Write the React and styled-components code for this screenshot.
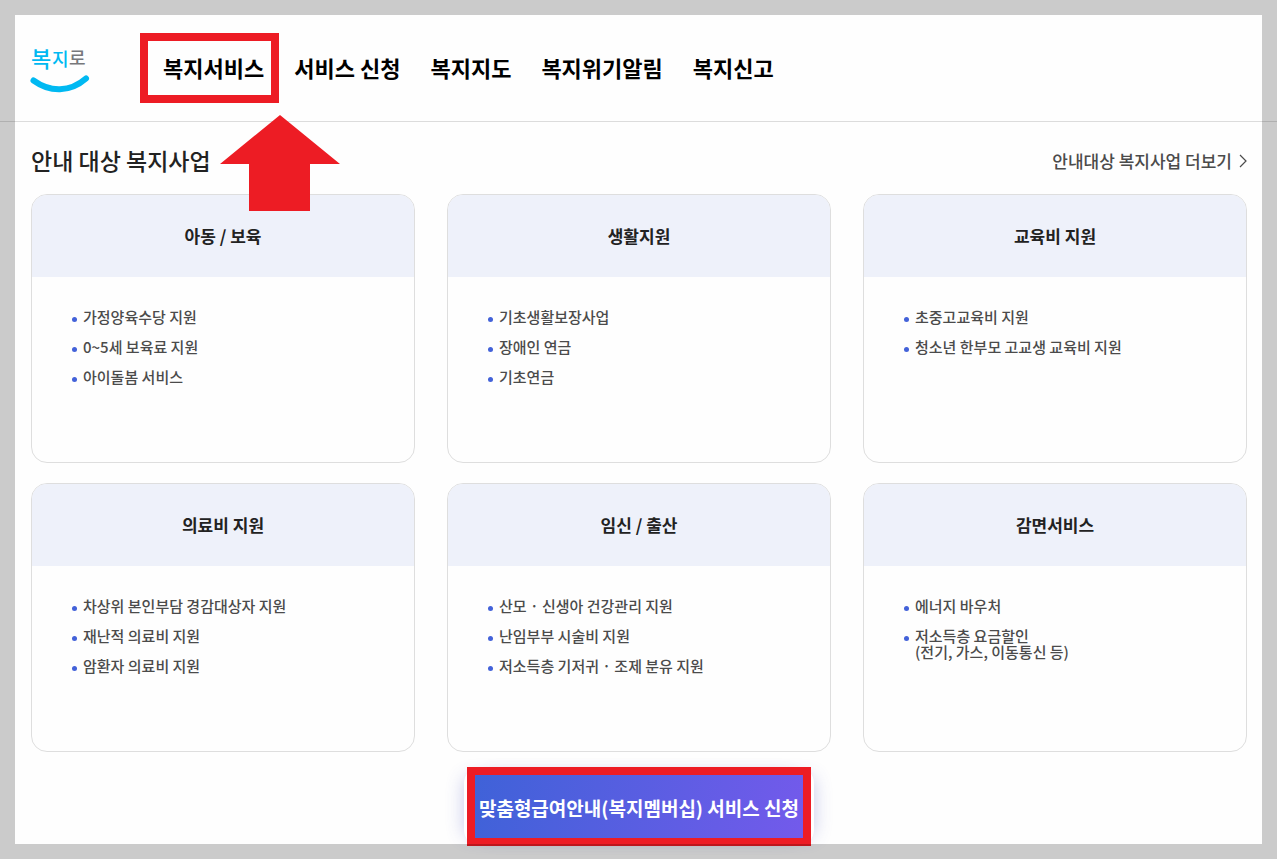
import React from "react";
import styled, { createGlobalStyle } from "styled-components";

const GlobalStyle = createGlobalStyle`
  *, *::before, *::after { box-sizing: border-box; }
  body {
    margin: 0;
    background: #fefefe;
    color: #222;
    font-family: "Noto Sans CJK KR", "Noto Sans", sans-serif;
  }
  a { color: inherit; text-decoration: none; }
  ul { list-style: none; margin: 0; padding: 0; }
`;

const Page = styled.div`
  min-height: 100vh;
  padding: 15px 0 13px;
`;

const PageFrame = styled.div`
  position: fixed;
  inset: 0;
  border: 15px solid rgba(0, 0, 0, 0.2);
  pointer-events: none;
  z-index: 10;
`;

const Header = styled.header`
  display: flex;
  align-items: center;
  gap: 73px;
  height: 107px;
  padding: 0 30px;
  border-bottom: 1px solid #dcdcdc;
`;

const LogoLink = styled.a`
  display: block;
  width: 60px;
  height: 56px;

  svg { display: block; overflow: visible; }
`;

const NavList = styled.ul`
  display: flex;
  gap: 30px;
  padding-bottom: 2px;
`;

const NavItem = styled.li`
  position: relative;
`;

const NavLink = styled.a`
  display: block;
  color: #000;
  font-size: 22px;
  font-weight: 700;
  line-height: 32px;
  white-space: nowrap;
`;

const NavHighlight = styled.span`
  position: absolute;
  inset: -18px -15px -20px -23px;
  border: 8px solid #ed1c24;
  pointer-events: none;
`;

const Arrow = styled.svg`
  position: absolute;
  left: 57px;
  top: 64px;
  z-index: 2;
  pointer-events: none;
`;

const Main = styled.main`
  padding: 0 30px 0 31px;
`;

const SectionHead = styled.div`
  display: flex;
  align-items: center;
  justify-content: space-between;
  height: 72px;
`;

const SectionTitle = styled.h1`
  margin: 0;
  padding-top: 4px;
  font-size: 23px;
  font-weight: 500;
  line-height: 32px;
`;

const MoreLink = styled.a`
  display: flex;
  align-items: center;
  gap: 7px;
  padding-top: 6px;
  color: #4b4b4b;
  font-size: 17px;
  font-weight: 500;
  line-height: 24px;
`;

const CardGrid = styled.div`
  display: grid;
  grid-template-columns: repeat(3, 1fr);
  gap: 20px 32px;
`;

const Card = styled.section`
  min-height: 269px;
  border: 1px solid #dedede;
  border-radius: 16px;
  overflow: hidden;
`;

const CardTitle = styled.h2`
  margin: 0;
  padding: 29px 16px;
  background: #eef1fa;
  font-size: 17px;
  font-weight: 700;
  line-height: 24px;
  text-align: center;
`;

const ServiceList = styled.ul`
  display: flex;
  flex-direction: column;
  gap: 14px;
  padding: 32px 40px;
`;

const ServiceItem = styled.li`
  display: flex;
  gap: 6px;
  color: #4b4b4b;
  font-size: 15px;
  font-weight: 500;
  line-height: 16px;
  white-space: pre-line;

  &::before {
    content: "";
    flex: none;
    width: 5px;
    height: 5px;
    margin-top: 8px;
    border-radius: 50%;
    background: #4362d9;
  }
`;

const ActionRow = styled.div`
  display: flex;
  justify-content: center;
  padding-top: 15px;
`;

const ActionCard = styled.div`
  padding: 0 3px;
  border-radius: 16px;
  background: #fff;
  box-shadow: 10px 0 18px -10px rgba(70, 80, 190, 0.3), -10px 0 18px -10px rgba(70, 80, 190, 0.3);
`;

const ActionHighlight = styled.div`
  border: 8px solid #ed1c24;
`;

const ActionButton = styled.button`
  display: block;
  height: 63px;
  padding: 2px 4px 0;
  border: 0;
  background: linear-gradient(100deg, #3f62d8, #735aeb);
  color: #fff;
  font-family: inherit;
  font-size: 19px;
  font-weight: 700;
  line-height: 28px;
  white-space: nowrap;
  cursor: pointer;
`;

const menu = ["복지서비스", "서비스 신청", "복지지도", "복지위기알림", "복지신고"];

const categories = [
  { title: "아동 / 보육", items: ["가정양육수당 지원", "0~5세 보육료 지원", "아이돌봄 서비스"] },
  { title: "생활지원", items: ["기초생활보장사업", "장애인 연금", "기초연금"] },
  { title: "교육비 지원", items: ["초중고교육비 지원", "청소년 한부모 고교생 교육비 지원"] },
  { title: "의료비 지원", items: ["차상위 본인부담 경감대상자 지원", "재난적 의료비 지원", "암환자 의료비 지원"] },
  { title: "임신 / 출산", items: ["산모 · 신생아 건강관리 지원", "난임부부 시술비 지원", "저소득층 기저귀 · 조제 분유 지원"] },
  { title: "감면서비스", items: ["에너지 바우처", "저소득층 요금할인\n(전기, 가스, 이동통신 등)"] },
];

function Logo() {
  return (
    <LogoLink href="#" aria-label="복지로">
      <svg width="60" height="56" viewBox="0 0 60 56">
        <g fontFamily="'Noto Sans CJK KR', sans-serif" fontWeight="500">
          <text x="1" y="27" fontSize="22" fill="#00b9f2">복</text>
          <text x="22" y="26" fontSize="18" fill="#00b9f2">지</text>
          <text x="39" y="25" fontSize="18" fill="#77787b">로</text>
        </g>
        <path
          d="M3.5 40.5C20 52.5 40 52.5 56 38.5"
          fill="none"
          stroke="#00b9f2"
          strokeWidth="6"
          strokeLinecap="round"
        />
      </svg>
    </LogoLink>
  );
}

export default function App() {
  return (
    <>
      <GlobalStyle />
      <Page>
        <Header>
          <Logo />
          <nav>
            <NavList>
              {menu.map((label, index) => (
                <NavItem key={label}>
                  <NavLink href="#">{label}</NavLink>
                  {index === 0 && (
                    <>
                      <NavHighlight />
                      <Arrow width="120" height="96" viewBox="0 0 120 96" aria-hidden="true">
                        <path d="M60 0L120 49H90V96H29V49H0Z" fill="#ed1c24" />
                      </Arrow>
                    </>
                  )}
                </NavItem>
              ))}
            </NavList>
          </nav>
        </Header>
        <Main>
          <SectionHead>
            <SectionTitle>안내 대상 복지사업</SectionTitle>
            <MoreLink href="#">
              안내대상 복지사업 더보기
              <svg width="8" height="14" viewBox="0 0 8 14" aria-hidden="true">
                <path d="M1 1L7 7L1 13" fill="none" stroke="#4b4b4b" strokeWidth="1.2" />
              </svg>
            </MoreLink>
          </SectionHead>
          <CardGrid>
            {categories.map(({ title, items }) => (
              <Card key={title}>
                <CardTitle>{title}</CardTitle>
                <ServiceList>
                  {items.map((item) => (
                    <ServiceItem key={item}>{item}</ServiceItem>
                  ))}
                </ServiceList>
              </Card>
            ))}
          </CardGrid>
          <ActionRow>
            <ActionCard>
              <ActionHighlight>
                <ActionButton type="button">맞춤형급여안내(복지멤버십) 서비스 신청</ActionButton>
              </ActionHighlight>
            </ActionCard>
          </ActionRow>
        </Main>
      </Page>
      <PageFrame />
    </>
  );
}
